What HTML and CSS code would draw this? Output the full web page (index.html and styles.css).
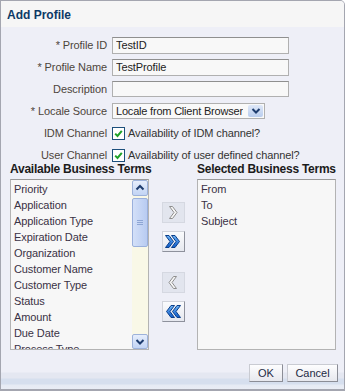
FILE: index.html
```html
<!DOCTYPE html>
<html lang="en">
<head>
  <meta charset="UTF-8" />
  <title>Add Profile</title>
  <link rel="stylesheet" href="styles.css">
</head>
<body>
  <div class="dialog">
    <div class="title">Add Profile</div>

    <div class="form">
      <label class="lbl">* Profile ID</label>
      <input class="field" type="text" value="TestID">

      <label class="lbl">* Profile Name</label>
      <input class="field" type="text" value="TestProfile">

      <label class="lbl">Description</label>
      <input class="field short" type="text" value="">

      <label class="lbl">* Locale Source</label>
      <div class="select">
        <span class="select-text">Locale from Client Browser</span>
        <span class="select-btn">
          <svg width="12" height="10" viewBox="0 0 12 10"><path d="M2.5 3 L6 6.5 L9.5 3" fill="none" stroke="#1d3c6e" stroke-width="2"/></svg>
        </span>
      </div>

      <label class="lbl">IDM Channel</label>
      <div class="check">
        <span class="box"><svg width="11" height="11" viewBox="0 0 11 11"><path d="M2.2 5.6 L4.5 8 L8.8 2.8" fill="none" stroke="#1fa12a" stroke-width="2"/></svg></span>
        <span>Availability of IDM channel?</span>
      </div>

      <label class="lbl">User Channel</label>
      <div class="check">
        <span class="box"><svg width="11" height="11" viewBox="0 0 11 11"><path d="M2.2 5.6 L4.5 8 L8.8 2.8" fill="none" stroke="#1fa12a" stroke-width="2"/></svg></span>
        <span>Availability of user defined channel?</span>
      </div>
    </div>

    <div class="shuttle">
      <div class="col">
        <div class="head">Available Business Terms</div>
        <div class="list">
          <div class="items">
            <div class="item">Priority</div>
            <div class="item">Application</div>
            <div class="item">Application Type</div>
            <div class="item">Expiration Date</div>
            <div class="item">Organization</div>
            <div class="item">Customer Name</div>
            <div class="item">Customer Type</div>
            <div class="item">Status</div>
            <div class="item">Amount</div>
            <div class="item">Due Date</div>
            <div class="item">Process Type</div>
          </div>
          <div class="scrollbar">
            <div class="sb-btn">
              <svg width="14" height="14" viewBox="0 0 14 14"><path d="M3.5 8.5 L7 5 L10.5 8.5" fill="none" stroke="#1d3c6e" stroke-width="2"/></svg>
            </div>
            <div class="sb-thumb"><span class="grip"></span></div>
            <div class="sb-track"></div>
            <div class="sb-btn down">
              <svg width="14" height="13" viewBox="0 0 14 13"><path d="M3.5 5 L7 8.5 L10.5 5" fill="none" stroke="#1d3c6e" stroke-width="2"/></svg>
            </div>
          </div>
        </div>
      </div>

      <div class="moves">
        <button class="mv off">
          <svg width="10" height="13" viewBox="0 0 10 13"><polygon points="1.5,0.5 4.5,0.5 9,6.5 4.5,12.5 1.5,12.5 6,6.5" fill="#f6f6f6" stroke="#8e8e8e"/></svg>
        </button>
        <button class="mv on">
          <svg width="16" height="13" viewBox="0 0 16 13"><defs><linearGradient id="bl" x1="0" y1="0" x2="0" y2="1"><stop offset="0" stop-color="#6fb4f5"/><stop offset="1" stop-color="#0c5ac8"/></linearGradient></defs><polygon points="0.5,0.5 4,0.5 8.5,6.5 4,12.5 0.5,12.5 5,6.5" fill="url(#bl)" stroke="#0b3f8a"/><polygon points="6.5,0.5 10,0.5 14.5,6.5 10,12.5 6.5,12.5 11,6.5" fill="url(#bl)" stroke="#0b3f8a"/></svg>
        </button>
        <button class="mv off gap">
          <svg width="10" height="13" viewBox="0 0 10 13"><polygon points="8.5,0.5 5.5,0.5 1,6.5 5.5,12.5 8.5,12.5 4,6.5" fill="#f6f6f6" stroke="#8e8e8e"/></svg>
        </button>
        <button class="mv on">
          <svg width="16" height="13" viewBox="0 0 16 13"><defs><linearGradient id="bl2" x1="0" y1="0" x2="0" y2="1"><stop offset="0" stop-color="#6fb4f5"/><stop offset="1" stop-color="#0c5ac8"/></linearGradient></defs><polygon points="15.5,0.5 12,0.5 7.5,6.5 12,12.5 15.5,12.5 11,6.5" fill="url(#bl2)" stroke="#0b3f8a"/><polygon points="9.5,0.5 6,0.5 1.5,6.5 6,12.5 9.5,12.5 5,6.5" fill="url(#bl2)" stroke="#0b3f8a"/></svg>
        </button>
      </div>

      <div class="col">
        <div class="head">Selected Business Terms</div>
        <div class="list">
          <div class="items">
            <div class="item">From</div>
            <div class="item">To</div>
            <div class="item">Subject</div>
          </div>
        </div>
      </div>
    </div>

    <div class="footer">
      <button class="btn ok">OK</button>
      <button class="btn cancel">Cancel</button>
    </div>
  </div>
</body>
</html>
```

FILE: styles.css
```css
body {
  margin: 0;
  font-family: "Liberation Sans", Arial, sans-serif;
  font-size: 11px;
  letter-spacing: -0.1px;
  color: #222;
}
.dialog {
  width: 345px;
  height: 391px;
  box-sizing: border-box;
  border: 1px solid #a4a6b0;
  border-bottom-width: 2px;
  border-top-right-radius: 5px;
  background: #eeeff7;
  display: flex;
  flex-direction: column;
  overflow: hidden;
}
.title {
  height: 26px;
  box-sizing: border-box;
  padding: 2px 0 0 6px;
  line-height: 24px;
  background: #f6f6f6;
  font-size: 12px;
  font-weight: bold;
  letter-spacing: 0;
  color: #0d3a66;
}
.form {
  display: grid;
  grid-template-columns: 106px 1fr;
  grid-auto-rows: 22px;
  column-gap: 5px;
  align-items: center;
  padding-top: 7px;
}
.lbl {
  text-align: right;
  color: #4d453b;
  white-space: nowrap;
}
.field {
  width: 177px;
  height: 17px;
  box-sizing: border-box;
  margin: 0;
  padding: 0 3px;
  border: 1px solid #b0b0b0;
  border-top-color: #8f8f8f;
  background: #f8f8f8;
  font-family: inherit;
  font-size: 11px;
  letter-spacing: -0.1px;
  color: #222;
  outline: none;
}
.field.short {
  height: 16px;
}
.select {
  width: 153px;
  height: 16px;
  box-sizing: border-box;
  display: flex;
  align-items: center;
  justify-content: space-between;
  border: 1px solid #b0b0b0;
  background: #f9f9f9;
  padding-left: 3px;
}
.select-text {
  color: #222;
  letter-spacing: -0.2px;
  white-space: nowrap;
  overflow: hidden;
}
.select-btn {
  flex-shrink: 0;
  width: 15px;
  height: 12px;
  margin-right: 1px;
  display: flex;
  align-items: center;
  justify-content: center;
  background: linear-gradient(#dfe8f8, #b9cdee);
  border-radius: 2px;
}
.check {
  display: flex;
  align-items: center;
  gap: 3px;
  color: #333;
  white-space: nowrap;
}
.box {
  flex-shrink: 0;
  width: 13px;
  height: 13px;
  box-sizing: border-box;
  border: 1px solid #1c4f7c;
  background: #fff;
  display: flex;
  align-items: center;
  justify-content: center;
}
.shuttle {
  display: flex;
  align-items: flex-start;
  padding-left: 9px;
  margin-top: -4px;
}
.col {
  width: 139px;
}
.head {
  height: 17px;
  line-height: 14px;
  font-size: 12px;
  font-weight: bold;
  letter-spacing: -0.25px;
  color: #1b1b1b;
  white-space: nowrap;
}
.list {
  height: 171px;
  box-sizing: border-box;
  border: 1px solid #b3b3b3;
  border-top-color: #999;
  background: #f7f7f7;
  display: flex;
  overflow: hidden;
}
.items {
  flex: 1;
  padding: 1px 0 0 3px;
  overflow: hidden;
}
.item {
  height: 16px;
  line-height: 16px;
  color: #3a3245;
  white-space: nowrap;
}
.scrollbar {
  width: 16px;
  display: flex;
  flex-direction: column;
  background: #f9f8e7;
}
.sb-btn {
  height: 16px;
  box-sizing: border-box;
  border: 1px solid #9db2da;
  border-radius: 2px;
  background: linear-gradient(#e6eefc, #c2d4f4);
  display: flex;
  align-items: center;
  justify-content: center;
}
.sb-btn.down {
  height: 15px;
}
.sb-thumb {
  height: 49px;
  margin-top: 2px;
  box-sizing: border-box;
  border: 1px solid #9ab0dc;
  border-radius: 2px;
  background: linear-gradient(90deg, #d3e0f8, #b8cbf1);
  display: flex;
  align-items: center;
  justify-content: center;
}
.grip {
  width: 6px;
  height: 5px;
  border-top: 1px solid #8ea6d4;
  border-bottom: 1px solid #8ea6d4;
  box-sizing: border-box;
  background: linear-gradient(#8ea6d4, #8ea6d4) center / 6px 1px no-repeat;
}
.sb-track {
  flex: 1;
}
.moves {
  width: 48px;
  display: flex;
  flex-direction: column;
  align-items: center;
  gap: 8px;
  margin-top: 40px;
}
.mv {
  width: 23px;
  height: 21px;
  padding: 0;
  display: flex;
  align-items: center;
  justify-content: center;
  box-sizing: border-box;
}
.mv.off {
  background: #e2e5ee;
  border: 1px solid #d5d8e1;
}
.mv.on {
  background: linear-gradient(#fafbfd, #e6e8ef);
  border: 1px solid #8e919c;
  border-top-color: #d0d3db;
  border-left-color: #d0d3db;
}
.mv.gap {
  margin-top: 12px;
}
.footer {
  flex: 1;
  display: flex;
  justify-content: flex-end;
  align-items: flex-start;
  gap: 4px;
  padding: 14px 6px 0 0;
  background: linear-gradient(#eeeff7 0, #eeeff7 22px, #e4e7f1 23px, #e4e7f1 28px, #d6dfee 29px, #d6dfee 34px, #e6ebf4 35px, #e9edf5 100%);
}
.btn {
  height: 18px;
  padding: 0;
  box-sizing: border-box;
  border: 1px solid #8b8d96;
  border-top-color: #c9cbd2;
  border-left-color: #c9cbd2;
  background: linear-gradient(#fdfdfe, #e7e8ee);
  font-family: inherit;
  font-size: 11px;
  color: #1e2a44;
}
.btn.ok {
  width: 34px;
}
.btn.cancel {
  width: 51px;
}
```
